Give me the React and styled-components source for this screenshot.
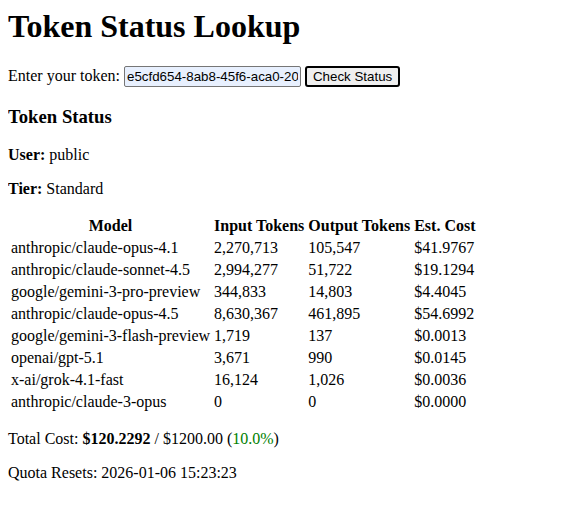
import React, { useState } from "react";
import styled, { createGlobalStyle } from "styled-components";

const GlobalStyle = createGlobalStyle`
  body {
    margin: 8px;
    font-family: "Liberation Serif", "Times New Roman", serif;
    font-size: 16px;
    color: #000;
    background: #fff;
  }
`;

const rows = [
  ["anthropic/claude-opus-4.1", "2,270,713", "105,547", "$41.9767"],
  ["anthropic/claude-sonnet-4.5", "2,994,277", "51,722", "$19.1294"],
  ["google/gemini-3-pro-preview", "344,833", "14,803", "$4.4045"],
  ["anthropic/claude-opus-4.5", "8,630,367", "461,895", "$54.6992"],
  ["google/gemini-3-flash-preview", "1,719", "137", "$0.0013"],
  ["openai/gpt-5.1", "3,671", "990", "$0.0145"],
  ["x-ai/grok-4.1-fast", "16,124", "1,026", "$0.0036"],
  ["anthropic/claude-3-opus", "0", "0", "$0.0000"],
];

function App() {
  const [token, setToken] = useState("e5cfd654-8ab8-45f6-aca0-2026f1b3c9d7");

  return (
    <>
      <GlobalStyle />
      <Title>Token Status Lookup</Title>
      <Form onSubmit={(e) => e.preventDefault()}>
        Enter your token:{" "}
        <TokenInput value={token} onChange={(e) => setToken(e.target.value)} />{" "}
        <CheckButton type="submit">Check Status</CheckButton>
      </Form>
      <Status>
        <SubTitle>Token Status</SubTitle>
        <Line>
          <b>User:</b> public
        </Line>
        <Line>
          <b>Tier:</b> Standard
        </Line>
        <Usage>
          <thead>
            <tr>
              <th>Model</th>
              <th>Input Tokens</th>
              <th>Output Tokens</th>
              <th>Est. Cost</th>
            </tr>
          </thead>
          <tbody>
            {rows.map((r) => (
              <tr key={r[0]}>
                {r.map((c, i) => (
                  <td key={i}>{c}</td>
                ))}
              </tr>
            ))}
          </tbody>
        </Usage>
        <Line>
          Total Cost: <b>$120.2292</b> / $1200.00 (<Pct>10.0%</Pct>)
        </Line>
        <Line>Quota Resets: 2026-01-06 15:23:23</Line>
      </Status>
    </>
  );
}

export default App;

const Title = styled.h1`
  font-size: 32px;
  margin: 0 0 21px;
`;

const Form = styled.form`
  margin: 0;
`;

const TokenInput = styled.input`
  font-family: "Liberation Sans", Arial, sans-serif;
  font-size: 13.33px;
  width: 177px;
  height: 21px;
  box-sizing: border-box;
  padding: 1px 2px;
  border: 1px solid #767676;
  border-radius: 2px;
  background: #e8f0fe;
  color: #000;
`;

const CheckButton = styled.button`
  font-family: "Liberation Sans", Arial, sans-serif;
  font-size: 13.33px;
  padding: 1px 6px;
  height: 21px;
  border: 2px solid #000;
  border-radius: 3px;
  background: #efefef;
  color: #000;
`;

const Status = styled.div`
  margin-top: 16px;
`;

const SubTitle = styled.h3`
  font-size: 18.72px;
  margin: 18.72px 0;
`;

const Line = styled.p`
  margin: 16px 0;
`;

const Usage = styled.table`
  border-collapse: separate;
  border-spacing: 2px;
  th,
  td {
    padding: 1px;
  }
  td {
    text-align: left;
  }
`;

const Pct = styled.span`
  color: green;
`;
